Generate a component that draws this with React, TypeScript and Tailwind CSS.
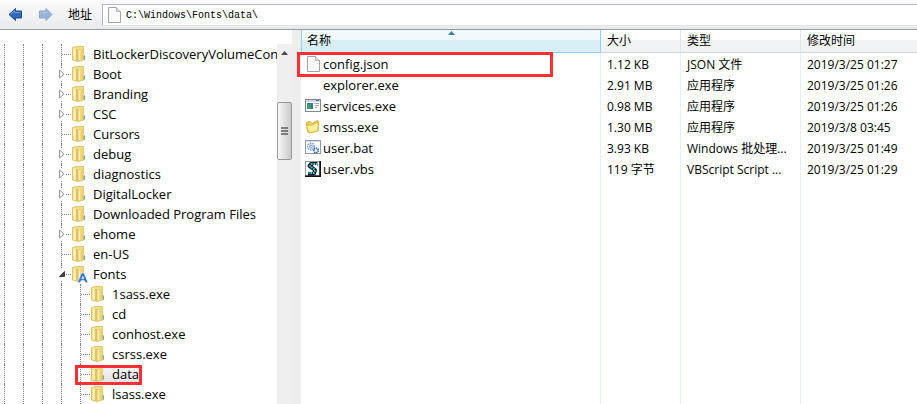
import { useState } from "react";
import type { ReactNode } from "react";

type TreeNode = {
  name: string;
  depth: 0 | 1;
  state?: "closed" | "open";
  fonts?: boolean;
};

const nodes: TreeNode[] = [
  { name: "BitLockerDiscoveryVolumeConte", depth: 0 },
  { name: "Boot", depth: 0, state: "closed" },
  { name: "Branding", depth: 0, state: "closed" },
  { name: "CSC", depth: 0, state: "closed" },
  { name: "Cursors", depth: 0 },
  { name: "debug", depth: 0, state: "closed" },
  { name: "diagnostics", depth: 0, state: "closed" },
  { name: "DigitalLocker", depth: 0, state: "closed" },
  { name: "Downloaded Program Files", depth: 0 },
  { name: "ehome", depth: 0, state: "closed" },
  { name: "en-US", depth: 0 },
  { name: "Fonts", depth: 0, state: "open", fonts: true },
  { name: "1sass.exe", depth: 1 },
  { name: "cd", depth: 1 },
  { name: "conhost.exe", depth: 1 },
  { name: "csrss.exe", depth: 1 },
  { name: "data", depth: 1 },
  { name: "lsass.exe", depth: 1 },
];

function TreeFolderIcon({ fonts = false }: { fonts?: boolean }) {
  return (
    <svg width="16" height="16" viewBox="0 0 16 16" className="shrink-0 overflow-visible" aria-hidden="true">
      <path d="M1.5 1.5 L6 0.5 H12.5 V14 L7 15.5 L1.5 14 Z" fill="#f3df8c" stroke="#dcc468" />
      <path d="M2.5 2.5 H5 V14 L2.5 13.5 Z" fill="#f9edb0" />
      <path d="M6.5 3.5 L12.5 2 V13.5 L7 15.5 Z" fill="#eed377" />
      <path d="M8.5 4 V14" stroke="#faeeb0" strokeWidth="1.6" />
      <path d="M6 3 V14.8" stroke="#bfa045" strokeWidth="0.9" />
      {fonts ? (
        <path
          d="M6.5 16.5 L10.5 7 H13 L17 16.5 H14.2 L13.4 14.6 H10 L9.3 16.5 Z M10.7 12.8 H12.8 L11.8 10 Z"
          fill="#2f74cf"
          stroke="#ffffff"
          strokeWidth="0.5"
          fillRule="evenodd"
        />
      ) : (
        <>
          <path d="M11 9.5 H14 V13.5 L11.5 14.8 Z" fill="#e5c556" />
          <path d="M13.5 9.5 V13.5" stroke="#5aa7e2" strokeWidth="1" />
        </>
      )}
    </svg>
  );
}

function PageIcon() {
  return (
    <svg width="16" height="16" viewBox="0 0 16 16" className="shrink-0" aria-hidden="true">
      <path d="M2.5 0.5 H10.5 L14.5 4.5 V15.5 H2.5 Z" fill="#fbfbfb" stroke="#a4a4a4" />
      <path d="M10.5 0.5 V4.5 H14.5" fill="#e6e6e6" stroke="#b0b0b0" />
    </svg>
  );
}

function AppIcon() {
  return (
    <svg width="16" height="16" viewBox="0 0 16 16" className="shrink-0" aria-hidden="true">
      <rect x="0.5" y="1.5" width="15" height="12" fill="#ffffff" stroke="#7f8a96" />
      <rect x="1" y="2" width="14" height="2" fill="#cdd6df" />
      <rect x="2" y="5" width="6" height="6" fill="#3b6fae" />
      <rect x="2" y="6" width="4" height="5" fill="#3f9a68" />
      <path d="M9.5 5.5 H14 M9.5 7.5 H14 M9.5 9.5 H12" stroke="#97a6b8" />
      <path d="M11 2.5 H14" stroke="#4b6a90" />
    </svg>
  );
}

function YellowFolderIcon() {
  return (
    <svg width="16" height="16" viewBox="0 0 16 16" className="shrink-0" aria-hidden="true">
      <path d="M1.5 3.5 L5 2.5 L7 4.5 L12.5 1.5 L13.5 3 L13 12 L4 14 L2.5 12.5 Z" fill="#f0cf52" stroke="#d3a935" />
      <path d="M1.5 6.5 L8 6 L9.5 4.5 L13.5 4 L12.5 12 L4 14 Z" fill="#fdf09c" stroke="#dcb84a" strokeWidth="0.8" />
    </svg>
  );
}

function BatchIcon() {
  return (
    <svg width="16" height="16" viewBox="0 0 16 16" className="shrink-0" aria-hidden="true">
      <rect x="0.5" y="0.5" width="15" height="13" fill="#ffffff" stroke="#9099a5" />
      <path d="M1 1.5 H15" stroke="#d5dce4" />
      <circle cx="6" cy="6.5" r="3.4" fill="#e7f0fa" stroke="#86a6d0" strokeWidth="1.6" strokeDasharray="1.6 0.8" />
      <circle cx="6" cy="6.5" r="1.4" fill="#ffffff" stroke="#5c82b8" strokeWidth="0.8" />
      <circle cx="11" cy="10.5" r="2.3" fill="#d5e3f5" stroke="#38639f" strokeWidth="1.5" strokeDasharray="1.3 0.6" />
      <circle cx="11" cy="10.5" r="0.8" fill="#ffffff" />
    </svg>
  );
}

function ScriptIcon() {
  return (
    <svg width="16" height="16" viewBox="0 0 16 16" className="shrink-0" aria-hidden="true">
      <rect x="0.5" y="0.5" width="14" height="14" fill="#ffffff" stroke="#9a9a9a" />
      <path d="M15.2 0 V15.2 H0" fill="none" stroke="#111111" strokeWidth="1.6" />
      <path
        d="M12.5 3 H6 L4.5 5 L10 9 L9 12.5 H3"
        fill="none"
        stroke="#101820"
        strokeWidth="4"
        strokeLinejoin="round"
      />
      <path
        d="M12.5 3 H6.5 L5 5 L10 9 L9 12 H3.5"
        fill="none"
        stroke="#3fd0dc"
        strokeWidth="1.8"
        strokeDasharray="1.6 0.9"
      />
      <path d="M8 4.5 H12 M3.5 10.5 H7.5" stroke="#ffffff" />
    </svg>
  );
}

type FileRow = { name: string; icon: ReactNode; size: string; type: string; date: string };

const files: FileRow[] = [
  { name: "config.json", icon: <PageIcon />, size: "1.12 KB", type: "JSON 文件", date: "2019/3/25 01:27" },
  { name: "explorer.exe", icon: null, size: "2.91 MB", type: "应用程序", date: "2019/3/25 01:26" },
  { name: "services.exe", icon: <AppIcon />, size: "0.98 MB", type: "应用程序", date: "2019/3/25 01:26" },
  { name: "smss.exe", icon: <YellowFolderIcon />, size: "1.30 MB", type: "应用程序", date: "2019/3/8 03:45" },
  { name: "user.bat", icon: <BatchIcon />, size: "3.93 KB", type: "Windows 批处理...", date: "2019/3/25 01:49" },
  { name: "user.vbs", icon: <ScriptIcon />, size: "119 字节", type: "VBScript Script ...", date: "2019/3/25 01:29" },
];

function ArrowIcon({ forward = false }: { forward?: boolean }) {
  return (
    <svg width="16" height="16" viewBox="0 0 16 16" aria-hidden="true">
      {forward ? (
        <>
          <path d="M14 7.5 L8 1.5 V4 H1.5 V11 H8 V13.5 Z" fill="#9db4d8" stroke="#8aa3cb" />
          <path d="M2.5 5.5 H9" stroke="#bccce5" />
        </>
      ) : (
        <>
          <path d="M1 7.5 L7.5 1.5 V4 H13.5 V11 H7.5 V13.5 Z" fill="#2f68b5" stroke="#234c8c" />
          <path d="M3 7 L6.5 3.8 V5.5 H12.5" fill="none" stroke="#6d9ad6" />
        </>
      )}
    </svg>
  );
}

function Guide() {
  return <span className="w-[19px] shrink-0 self-stretch border-l border-dotted border-[#808080]" />;
}

function TreeRow({ node, selected, onSelect }: { node: TreeNode; selected: boolean; onSelect: () => void }) {
  return (
    <li className="relative flex h-5 items-center pl-1">
      <Guide />
      <Guide />
      <Guide />
      {node.depth === 1 && <Guide />}
      <span className="relative flex w-[10px] shrink-0 items-center self-stretch border-l border-dotted border-[#808080]">
        <span className="w-full border-t border-dotted border-[#808080]" />
        {node.state && (
          <span className="absolute top-1 -left-1 flex h-3 w-2 items-center justify-center bg-white">
            <svg width="8" height="10" viewBox="0 0 8 10" aria-hidden="true">
              {node.state === "closed" ? (
                <path d="M1.5 1 V9 L6 5 Z" fill="#ffffff" stroke="#9a9a9a" />
              ) : (
                <path d="M6.5 2.5 V7.5 H1.5 Z" fill="#444444" stroke="#262626" strokeWidth="0.8" />
              )}
            </svg>
          </span>
        )}
      </span>
      <button
        type="button"
        onClick={onSelect}
        className={`flex h-[18px] items-center gap-[6px] whitespace-nowrap ${
          selected ? "bg-linear-to-b from-[#f8f8f8] to-[#e2e2e2]" : ""
        }`}
      >
        <TreeFolderIcon fonts={node.fonts} />
        {node.name}
      </button>
      {node.name === "data" && (
        <span className="pointer-events-none absolute top-px left-[75px] h-5 w-[67px] border-3 border-[#fb3036]" />
      )}
    </li>
  );
}

export default function App() {
  const [path, setPath] = useState("C:\\Windows\\Fonts\\data\\");
  const [selected, setSelected] = useState("data");
  const head = "h-[23px] border-b p-0 text-left font-normal";
  const plainHead = "border-b-[#d5d5d5] bg-linear-to-b from-white from-45% to-[#f2f3f5] to-45% pl-[6px]";
  const cell = "p-0 pt-[2px] pl-[6px] whitespace-nowrap";

  return (
    <div className="flex h-screen flex-col overflow-hidden bg-white font-['Open_Sans','Noto_Sans_CJK_SC',sans-serif] text-[13px] leading-5 text-black">
      <header className="flex h-[30px] shrink-0 items-center border-b border-[#97999f] bg-linear-to-b from-[#fbfbfb] to-[#e9eaec] pl-2">
        <button type="button" aria-label="Back">
          <ArrowIcon />
        </button>
        <button type="button" aria-label="Forward" className="ml-[14px]">
          <ArrowIcon forward />
        </button>
        <label htmlFor="address" className="ml-[14px] w-[34px] shrink-0 text-[12px]">
          地址
        </label>
        <div className="flex h-[22px] min-w-0 flex-1 items-center gap-1 border border-r-0 border-[#b4b7be] border-b-[#e3e5e8] bg-white pl-[3px]">
          <PageIcon />
          <input
            id="address"
            value={path}
            onChange={(e) => setPath(e.target.value)}
            className="min-w-0 flex-1 pt-[3px] font-['Liberation_Mono',monospace] text-[10px] leading-4 outline-none"
          />
        </div>
      </header>

      <div className="flex min-h-0 flex-1">
        <nav aria-label="文件夹" className="w-[277px] shrink-0 overflow-hidden pt-[14px]">
          <ul>
            {nodes.map((n) => (
              <TreeRow key={n.name} node={n} selected={selected === n.name} onSelect={() => setSelected(n.name)} />
            ))}
          </ul>
        </nav>

        <div className="flex w-[15px] shrink-0 flex-col pt-[14px]">
          <div className="flex flex-1 flex-col items-center bg-[#efefef]">
            <button type="button" aria-label="Scroll up" className="flex h-[58px] w-full justify-center pt-[7px]">
              <svg width="7" height="4" viewBox="0 0 7 4" aria-hidden="true">
                <path d="M0 4 L3.5 0 L7 4 Z" fill="#4a4a4a" />
              </svg>
            </button>
            <button
              type="button"
              aria-label="Scroll thumb"
              className="flex h-[58px] w-full flex-col items-center justify-center rounded-xs border border-[#979797] bg-linear-to-r from-[#f7f7f7] to-[#c9cacc]"
            >
              <svg width="7" height="9" viewBox="0 0 7 9" aria-hidden="true">
                <path d="M0 1 H7 M0 4 H7 M0 7 H7" stroke="#5c5c5c" strokeWidth="1.4" />
              </svg>
            </button>
          </div>
        </div>
        <div className="w-[9px] shrink-0 bg-[#eeeeee]" />

        <main className="relative min-w-0 flex-1">
          <table className="h-full w-full table-fixed border-separate border-spacing-0">
            <colgroup>
              <col className="w-[300px]" />
              <col className="w-[80px]" />
              <col className="w-[120px]" />
              <col />
            </colgroup>
            <thead className="text-[12px]">
              <tr>
                <th
                  className={`${head} relative border-x border-x-[#8fd3f1] border-b-[#8fd3f1] bg-linear-to-b from-[#f2f9fd] from-45% to-[#d9eff7] to-45% pl-[5px]`}
                >
                  名称
                  <svg width="7" height="4" viewBox="0 0 7 4" className="absolute top-px left-[146px]" aria-hidden="true">
                    <path d="M0 4 L3.5 0 L7 4 Z" fill="#3d7f9f" />
                  </svg>
                </th>
                <th className={`${head} ${plainHead} border-r border-r-[#e0e4e8]`}>大小</th>
                <th className={`${head} ${plainHead} border-r border-r-[#e0e4e8]`}>类型</th>
                <th className={`${head} ${plainHead}`}>修改时间</th>
              </tr>
            </thead>
            <tbody className="text-[12px]">
              {files.map((f) => (
                <tr key={f.name} className="h-[21px]">
                  <td className="border-r border-[#e3f0fb] p-0 pt-px pl-1 text-[13px]">
                    <span className="flex h-5 items-center gap-[2px]">
                      <span className="h-4 w-4 shrink-0">{f.icon}</span>
                      {f.name}
                    </span>
                  </td>
                  <td className={`${cell} border-r border-[#e3f0fb] leading-[19px]`}>{f.size}</td>
                  <td className={`${cell} border-r border-[#e3f0fb] leading-[19px]`}>{f.type}</td>
                  <td className={`${cell} leading-[19px]`}>{f.date}</td>
                </tr>
              ))}
              <tr className="h-full" aria-hidden="true">
                <td className="border-r border-[#e3f0fb]" />
                <td className="border-r border-[#e3f0fb]" />
                <td className="border-r border-[#e3f0fb]" />
                <td />
              </tr>
            </tbody>
          </table>
          <span className="pointer-events-none absolute top-[22px] -left-1 h-[25px] w-[256px] border-3 border-[#fb3036]" />
        </main>
      </div>
    </div>
  );
}
